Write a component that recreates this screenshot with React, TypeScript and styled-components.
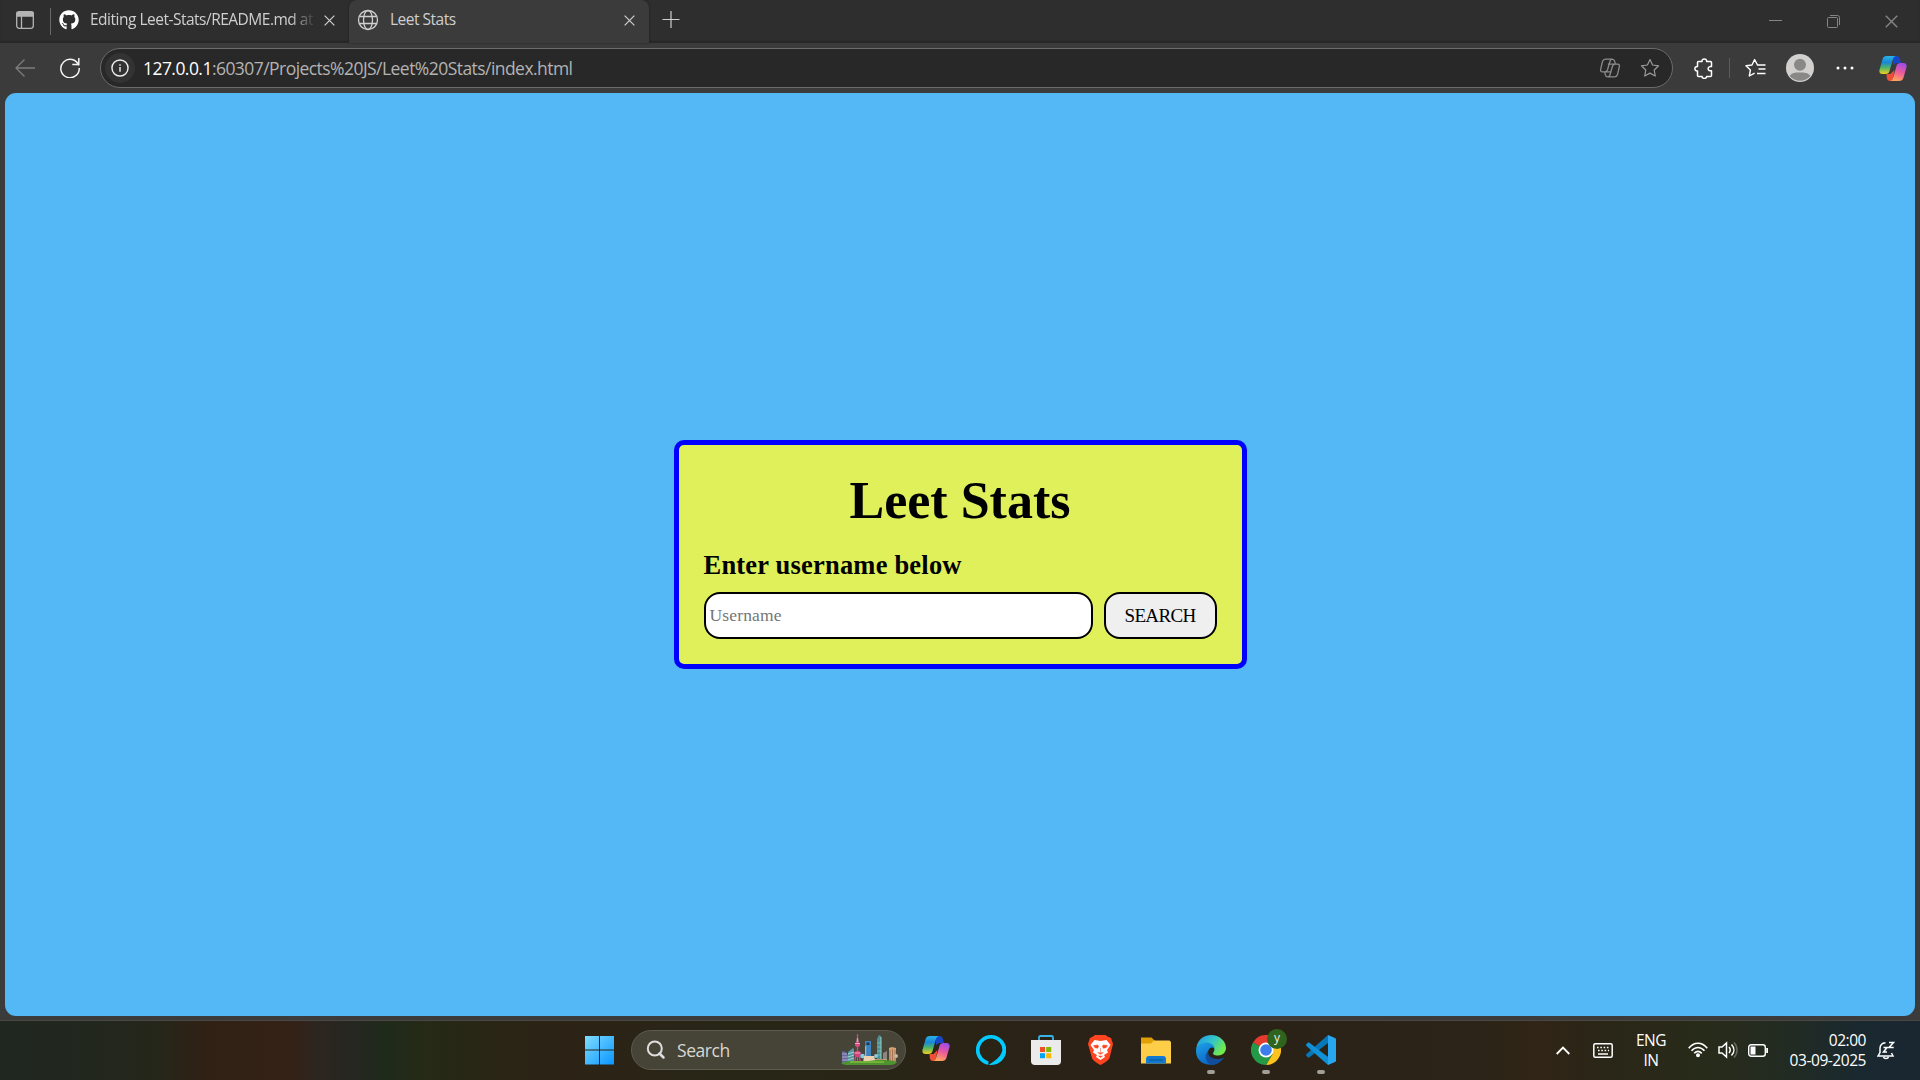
import React from "react";
import styled, { createGlobalStyle } from "styled-components";
import { FaGithub } from "react-icons/fa";

const Global = createGlobalStyle`
  * { box-sizing: border-box; }
  body { margin: 0; background: #3b3b3b; overflow: hidden; font-family: "Open Sans", "Noto Sans", sans-serif; }
  svg { display: block; flex: none; }
`;

const Screen = styled.div`
  width: 1920px; height: 1080px; display: flex; flex-direction: column; background: #3b3b3b;
`;
const TabStrip = styled.header`
  height: 43px; display: flex; align-items: flex-start; background: #2e2e2e;
  box-shadow: inset 0 -2px 1px #272727;
`;
const Workspaces = styled.div`
  width: 51px; height: 40px; padding: 11px 0 0 16px; border-right: 1px solid #666;
  border-image: linear-gradient(transparent 9px, #696969 9px, #696969 34px, transparent 34px) 1;
`;
const Tab = styled.div<{ $active?: boolean; $w: number }>`
  width: ${p => p.$w}px; height: 43px; display: flex; align-items: center; padding: 0 14px 3px 8px;
  background: ${p => (p.$active ? "#3b3b3b" : "transparent")};
  border-radius: ${p => (p.$active ? "8px 8px 0 0" : "0")};
  box-shadow: ${p => (p.$active ? "0 0 2px #1c1c1c" : "none")};
  color: #cfcfcf;
`;
const TabTitle = styled.span<{ $fade?: boolean; $spacing: number }>`
  flex: 1; margin: 0 0 2px 11px; overflow: hidden; white-space: nowrap; font-size: 15.5px; line-height: 22px;
  letter-spacing: ${p => p.$spacing}px;
  -webkit-mask-image: ${p => (p.$fade ? "linear-gradient(90deg, #000 200px, transparent 226px)" : "none")};
`;
const NewTab = styled.div`padding: 11px 0 0 13px;`;
const WindowControls = styled.div`
  margin-left: auto; display: flex; gap: 45px; padding: 15px 22px 0 0;
`;
const Toolbar = styled.div`
  height: 50px; display: flex; align-items: center; color: #f3f3f3;
`;
const NavButtons = styled.div`
  width: 100px; display: flex; gap: 25px; padding-left: 15px;
`;
const Address = styled.div`
  width: 1573px; height: 40px; border: 1px solid #6b6b6b; border-radius: 20px; background: #282828;
  display: flex; align-items: center; padding: 0 12px 0 4px;
`;
const InfoDisc = styled.div`
  width: 30px; height: 30px; border-radius: 50%; background: #333; display: grid; place-items: center;
`;
const Url = styled.div`
  flex: 1; margin: 0 0 1px 8px; font-size: 17.5px; line-height: 24px; letter-spacing: -0.55px; color: #b3b3b3;
`;
const Host = styled.span`color: #fff;`;
const AddressIcons = styled.div`display: flex; gap: 20px; align-items: center;`;
const ToolbarIcons = styled.div`
  display: flex; align-items: center; padding-left: 21px;
`;
const Rule = styled.div`width: 1px; height: 20px; background: #5c5c5c; margin: 0 15px;`;
const Spacer = styled.div<{ $w: number }>`width: ${p => p.$w}px;`;

const Page = styled.main`
  height: 923px; margin: 0 5px; border-radius: 11px; background: #53b8f5;
  display: flex; align-items: center; justify-content: center;
  font-family: "Liberation Serif", serif; color: #000;
`;
const Card = styled.section`
  width: 573px; height: 229px; border: 5px solid #0000ff; border-radius: 10px; background: #e0f05b;
  padding: 26px 25px 24px; display: flex; flex-direction: column;
`;
const Heading = styled.h1`
  margin: 0; text-align: center; font-size: 52px; line-height: 60px;
`;
const Label = styled.h2`
  margin: 19px 0 0; font-size: 26.5px; line-height: 30px; letter-spacing: 0.2px; white-space: nowrap;
`;
const Form = styled.div`display: flex; gap: 11px; margin-top: 12px;`;
const NameInput = styled.input`
  width: 389px; height: 47px; border: 2px solid #000; border-radius: 16px; background: #fff; padding: 1px 4px;
  font-family: inherit; font-size: 17.5px; letter-spacing: 0.15px; outline: none;
  &::placeholder { color: #757575; opacity: 1; }
`;
const SearchButton = styled.button`
  width: 113px; height: 47px; border: 2px solid #000; border-radius: 16px; background: #efefef; padding: 1px 0 0;
  font-family: inherit; font-size: 19px; letter-spacing: -0.65px; color: #000;
`;

const Taskbar = styled.footer`
  height: 60px; margin-top: 4px; border-top: 1px solid #4a4743; display: flex; align-items: center; color: #fff;
  padding-bottom: 1px;
  background: linear-gradient(90deg, #202720 0px, #22271e 100px, #26261a 160px, #302115 200px, #352217 290px, #2c251f 318px, #252722 355px, #202a1b 385px, #252a17 420px, #292615 480px, #2c2316 570px, #282617 720px, #292516 900px, #2a2216 1050px, #2a2216 1300px, #2c2418 1480px, #302516 1540px, #2a2618 1600px, #282b19 1700px, #222b23 1790px, #1a2930 1860px, #1a2530 1920px);
`;
const TaskApps = styled.div`
  margin-left: 585px; width: 762px; display: flex; align-items: center;
`;
const SearchBox = styled.div`
  width: 275px; height: 40px; margin-left: 16px; border-radius: 20px; border: 1px solid #5d5b4e;
  background: linear-gradient(90deg, #454437, #474438);
  display: flex; align-items: center; padding: 0 7px 0 14px; font-size: 17.5px; color: #d8d7d2; letter-spacing: -0.45px;
`;
const SearchText = styled.span`flex: 1; margin-left: 11px; line-height: 24px;`;
const AppIcon = styled.div<{ $running?: boolean; $gap: number }>`
  position: relative; width: 30px; height: 30px; margin-left: ${p => p.$gap}px;
  &::after {
    content: ""; display: ${p => (p.$running ? "block" : "none")};
    position: absolute; left: 11px; top: 35px; width: 8px; height: 4px; border-radius: 2px; background: #a19d97;
  }
`;
const ProfileBadge = styled.span`
  position: absolute; left: 16px; top: -6px; width: 20px; height: 20px; border-radius: 50%;
  background: #2f641e; color: #e6efe2; font-size: 12px; line-height: 17px; text-align: center;
`;
const Tray = styled.div`
  margin-left: auto; display: flex; align-items: center; padding-right: 25px;
`;
const TrayText = styled.div<{ $w: number; $right?: boolean; $spacing: number }>`
  width: ${p => p.$w}px; text-align: ${p => (p.$right ? "right" : "center")};
  font-size: 15.5px; line-height: 20px; letter-spacing: ${p => p.$spacing}px; white-space: nowrap;
  padding-bottom: 1px;
`;

const CopilotIcon = ({ id }: { id: string }) => (
  <svg width="28" height="27" viewBox="0 0 28 27">
    <defs>
      <linearGradient id={id + "a"} x1="0" y1="0" x2="0" y2="1">
        <stop offset="0" stopColor="#27b5e8" /><stop offset=".35" stopColor="#1a86d8" /><stop offset=".65" stopColor="#4fb568" /><stop offset="1" stopColor="#f4cf1c" />
      </linearGradient>
      <linearGradient id={id + "b"} x1=".7" y1="0" x2=".4" y2="1">
        <stop offset="0" stopColor="#9c4bea" /><stop offset=".5" stopColor="#ec5a9b" /><stop offset="1" stopColor="#ffa45c" />
      </linearGradient>
    </defs>
    <path d="M14 1h3.500c2 0 2.800 1 3.300 2.800L22 8h-5l-3 2z" fill="#1747c8" />
    <path d="M7.500 19h4l4-4-1.500 8c-.5 2-1.500 3-3 3-2 0-2.700-1-3.200-3z" fill="#ee5037" />
    <path d="M8 1h9c-1.700.3-2.600 1.500-3 3l-3.500 12c-.7 2.200-1.800 3-4 3H3.500C.8 19-.1 17 .6 14.500L3.600 4C4.300 2 5.500 1 8 1z" fill={`url(#${id}a)`} />
    <path d="M20 26h-9c1.700-.3 2.600-1.500 3-3l3.500-12c.7-2.200 1.800-3 4-3h3c2.700 0 3.600 2 2.900 4.500L24.400 23c-.7 2-1.900 3-4.400 3z" fill={`url(#${id}b)`} />
  </svg>
);

const CloseIcon = ({ size = 11, color = "#d0d0d0" }: { size?: number; color?: string }) => (
  <svg width={size} height={size} viewBox="0 0 12 12" fill="none" stroke={color} strokeWidth="1.3"><path d="M.7.7l10.600 10.600M11.300.7L.7 11.300" /></svg>
);

const StarPath = "M10 1.500l2.600 5.500 6 .8-4.400 4.200 1.100 6L10 15.100 4.700 18l1.100-6L1.400 7.800l6-.8z";

const Skyline = () => (
  <svg width="57" height="33" viewBox="0 0 57 33">
    <path d="M1 17l4 1 2 3v9H1z" fill="#65689c" /><path d="M1 20h5M1 23h6M1 26h6" stroke="#b3a5ca" />
    <path d="M7 18l5-4 1 1v15H7z" fill="#5496a0" /><path d="M7 20l6-2M7 23l6-2M7 26l6-2" stroke="#a2d0cf" />
    <path d="M16.500 0v31M15 19l-1.500 11M18 19l1.500 11" stroke="#c0508a" strokeWidth="1.300" />
    <path d="M15.300 8l.7-4h1l.7 4z" fill="#d89ab0" />
    <circle cx="16.500" cy="10.500" r="2.500" fill="#e0478b" /><circle cx="16.500" cy="20" r="3.200" fill="#d63f7f" /><path d="M14 9.500h5M13.500 19h6" stroke="#f6a6c4" />
    <path d="M24 7h6v23h-6z" fill="#3e83bd" /><path d="M25.500 8.500h3V11h-3z" fill="#24354c" /><path d="M24.700 12v17" stroke="#90cbe7" />
    <path d="M36 5l2-4 2 1v28h-4z" fill="#4b9196" /><path d="M40 3v26" stroke="#9ad0c5" /><path d="M36 9h4M36 13h4M36 17h4M36 21h4" stroke="#8bc7bf" strokeWidth=".7" />
    <path d="M42 19l4-2v12h-4z" fill="#8d8580" /><path d="M48 14l3-1 4 1v15h-7z" fill="#d5a46c" /><path d="M49 16v12M51.500 15v12M54 16v12" stroke="#a3755a" />
    <circle cx="21.500" cy="22" r="2.300" fill="#8bc9e5" /><circle cx="35" cy="22" r="2" fill="#84cce4" />
    <path d="M23 22h10l2 7H22z" fill="#ead0ae" /><path d="M34 25h12v4H34z" fill="#c79c79" /><circle cx="55" cy="22" r="2" fill="#c6b69a" />
    <path d="M0 29c8-3 13-1 19-2 10 1 15-2 25-1 6 0 10 1 12 2-2 3-6 3-9 3H8c-3 0-6 0-8-2z" fill="#4f9230" />
    <path d="M9 28h34" stroke="#80bd39" strokeWidth="1.500" />
  </svg>
);

export default function App() {
  return (
    <Screen>
      <Global />
      <TabStrip>
        <Workspaces>
          <svg width="18" height="18" viewBox="0 0 18 18" fill="none" stroke="#b4b4b4" strokeWidth="1.300">
            <rect x=".7" y=".7" width="16.600" height="16.600" rx="2.500" /><path d="M1 1.500h16v3.500H1z" fill="#b4b4b4" /><path d="M5.500 5v12" />
          </svg>
        </Workspaces>
        <Tab $w={298}>
          <FaGithub size={20} color="#fff" />
          <TabTitle $fade $spacing={-0.5}>Editing Leet-Stats/README.md at</TabTitle>
          <CloseIcon />
        </Tab>
        <Tab $w={300} $active>
          <svg width="22" height="22" viewBox="0 0 22 22" fill="none" stroke="#cfcfcf" strokeWidth="1.300">
            <circle cx="11" cy="11" r="9.500" /><ellipse cx="11" cy="11" rx="4.500" ry="9.500" /><path d="M2.300 7.500h17.400M2.300 14.500h17.400" />
          </svg>
          <TabTitle $spacing={-0.5}>Leet Stats</TabTitle>
          <CloseIcon />
        </Tab>
        <NewTab>
          <svg width="18" height="18" viewBox="0 0 18 18" stroke="#d0d0d0" strokeWidth="1.200"><path d="M.5 8.500h17M9 0v17" /></svg>
        </NewTab>
        <WindowControls>
          <svg width="13" height="13" viewBox="0 0 13 13" stroke="#858585"><path d="M0 5.500h13" /></svg>
          <svg width="13" height="13" viewBox="0 0 13 13" fill="none" stroke="#858585"><rect x=".5" y="2.500" width="10" height="10" rx="1" /><path d="M3 .5h7.500a2 2 0 0 1 2 2V10" /></svg>
          <CloseIcon size={13} color="#858585" />
        </WindowControls>
      </TabStrip>
      <Toolbar>
        <NavButtons>
          <svg width="20" height="20" viewBox="0 0 20 20" fill="none" stroke="#7d7d7d" strokeWidth="1.300"><path d="M20 10H1M9.500 1.500L1 10l8.500 8.500" /></svg>
          <svg width="20" height="20" viewBox="0 0 20 20" fill="none" stroke="#f4f4f4" strokeWidth="1.500"><path d="M18.700 7.500A9.200 9.200 0 1 0 19.200 10M18.800 0v6.500h-6.500" /></svg>
        </NavButtons>
        <Address>
          <InfoDisc>
            <svg width="18" height="18" viewBox="0 0 19 19" fill="none" stroke="#eee" strokeWidth="1.500"><circle cx="9.500" cy="9.500" r="8.500" /><path d="M9.500 8.500v5M9.500 5.500v1.500" /></svg>
          </InfoDisc>
          <Url><Host>127.0.0.1</Host>:60307/Projects%20JS/Leet%20Stats/index.html</Url>
          <AddressIcons>
            <svg width="20" height="20" viewBox="0 0 28 27" fill="none" stroke="#8b8b8b" strokeWidth="1.800">
              <path d="M8 1h9c2 0 3 1 3.500 3l1 4M17 1c-1.700.3-2.600 1.500-3 3l-3.500 12c-.7 2.200-1.800 3-4 3h-3C.8 19 .4 17 1.100 14.500L3.600 4C4.300 2 5.500 1 8 1zM20 26h-9c-2 0-3-1-3.500-3l-1-4M11 26c1.700-.3 2.600-1.500 3-3l3.500-12c.7-2.200 1.800-3 4-3h3c2.700 0 3.100 2 2.400 4.500L24.400 23c-.7 2-1.900 3-4.400 3zM11 8h10M7 19h9" />
            </svg>
            <svg width="20" height="20" viewBox="0 0 20 20" fill="none" stroke="#9a9a9a" strokeWidth="1.200" strokeLinejoin="round"><path d={StarPath} /></svg>
          </AddressIcons>
        </Address>
        <ToolbarIcons>
          <svg width="20" height="21" viewBox="0 0 20 21" fill="none" stroke="#fff" strokeWidth="1.500" strokeLinejoin="round">
            <path d="M4.500 3.500H8c-.4-3.500 5-3.500 4.600 0H16.500c.6 0 1 .4 1 1V8.500c-4.500-.7-4.500 5 0 4.300v4.700c0 .6-.4 1-1 1h-3.900c.4 2.500-4.900 2.500-4.500 0H4.500c-.6 0-1-.4-1-1v-4.600c-3.500.5-3.500-4.800 0-4.300V4.500c0-.6.4-1 1-1z" />
          </svg>
          <Rule />
          <svg width="21" height="20" viewBox="0 0 21 20" fill="none" stroke="#fff" strokeWidth="1.400" strokeLinejoin="round"><path d="M12.500 7l-2.900-5.500L7 7l-6 .8L5.400 12l-1.100 6 5.300-2.900M12 7h8.500M13.500 11h7M12 15.500h8.500" /></svg>
          <Spacer $w={20} />
          <svg width="28" height="28" viewBox="0 0 28 28"><circle cx="14" cy="14" r="14" fill="#d2d0ce" /><circle cx="14" cy="10.800" r="6" fill="#8a8886" /><path d="M3.600 22C6 18.300 10 18.500 14 18.500s8 0 10.400 3.500A14 14 0 0 1 3.600 22z" fill="#8a8886" /></svg>
          <Spacer $w={22} />
          <svg width="18" height="4" viewBox="0 0 18 4" fill="#fff"><circle cx="2" cy="2" r="1.500" /><circle cx="9" cy="2" r="1.500" /><circle cx="16" cy="2" r="1.500" /></svg>
          <Spacer $w={25} />
          <CopilotIcon id="tb" />
        </ToolbarIcons>
      </Toolbar>
      <Page>
        <Card>
          <Heading>Leet Stats</Heading>
          <Label>Enter username below</Label>
          <Form>
            <NameInput placeholder="Username" />
            <SearchButton>SEARCH</SearchButton>
          </Form>
        </Card>
      </Page>
      <Taskbar>
        <TaskApps>
          <svg width="30" height="30" viewBox="0 0 30 30">
            <defs><linearGradient id="win" x1="0" y1="0" x2="1" y2="1"><stop offset="0" stopColor="#7fddff" /><stop offset="1" stopColor="#0995ff" /></linearGradient></defs>
            <path d="M.5 1h13.500v13.500H0V1zM15 1h14v13.500H15zM0 15.500h14v14H0zM15 15.500h14v14H15z" fill="url(#win)" />
          </svg>
          <SearchBox>
            <svg width="20" height="20" viewBox="0 0 20 20" fill="none" stroke="#dedede" strokeWidth="2"><circle cx="8.800" cy="8.500" r="7" /><path d="M13.500 13.500l4 4" strokeWidth="2.500" strokeLinecap="round" /></svg>
            <SearchText>Search</SearchText>
            <Skyline />
          </SearchBox>
          <AppIcon $gap={16}><CopilotIcon id="tk" /></AppIcon>
          <AppIcon $gap={24}>
            <svg width="30" height="30" viewBox="0 0 30 30"><path fillRule="evenodd" d="M15 0a15 15 0 0 0-2.600 29.800V26.100C11.500 25.800 11 25.700 10 25.200A11.400 11.400 0 1 1 26.400 15C25 22 19 26 12.800 29.800A15 15 0 1 0 15 0z" fill="#00caff" /></svg>
          </AppIcon>
          <AppIcon $gap={25}>
            <svg width="30" height="30" viewBox="0 0 30 30">
              <path d="M8 6V2.500C8 1.700 8.500 1 9.500 1h11c1 0 1.500.7 1.500 1.500V6" fill="none" stroke="#35b5e8" strokeWidth="1.800" />
              <path d="M0 5h30v21a4 4 0 0 1-4 4H4a4 4 0 0 1-4-4z" fill="#ebebeb" />
              <path d="M9 12h5v5H9z" fill="#f25022" /><path d="M15.200 12h5v5h-5z" fill="#7fba00" /><path d="M9 18.200h5v5H9z" fill="#00a4ef" /><path d="M15.200 18.200h5v5h-5z" fill="#ffb900" />
            </svg>
          </AppIcon>
          <AppIcon $gap={25}>
            <svg width="30" height="30" viewBox="0 0 30 30">
              <path d="M7 1.500L9 0h10.500l2 1.500L25 3l1 3 1 3-3.500 14c-.7 2-5 5-9 7-4-2-8-5-8.500-7L2 9l1-3 1-3z" fill="#ff4420" />
              <path d="M8.500 5l6 1 6-1 4 5-3.500 5 1 2.500-4 2.500 1 2-4.500 3L10 22l1-2-4-2.500 1-2.500L4.500 10z" fill="#fff" />
              <path d="M7.500 10.500l4-.5 1.200 1-1 2.200-2.700-.4zM21.500 10.500l-4-.5-1.200 1 1 2.200 2.700-.4zM14.500 13v4M11.500 17.500l3 1.800 3-1.800M14.500 22.500l-2-1.500h4z" fill="#ff4420" stroke="#ff4420" strokeWidth=".5" />
            </svg>
          </AppIcon>
          <AppIcon $gap={25}>
            <svg width="30" height="30" viewBox="0 0 30 30">
              <path d="M0 2.500h10.500l3 3v4H0z" fill="#e0a006" /><path d="M0 8.500h10l3-3h15.500L30 7v21.500H0z" fill="#ffce48" />
              <path d="M5 28.500V24a3 3 0 0 1 3-3h14a3 3 0 0 1 3 3v4.500z" fill="#1179d1" /><path d="M8 25h14" stroke="#08548f" />
            </svg>
          </AppIcon>
          <AppIcon $gap={25} $running>
            <svg width="30" height="30" viewBox="0 0 30 30">
              <defs>
                <linearGradient id="eg" x1="0" y1="0" x2="1" y2=".5"><stop offset="0" stopColor="#2295e5" /><stop offset=".55" stopColor="#33c4ca" /><stop offset="1" stopColor="#72e94d" /></linearGradient>
                <linearGradient id="eb" x1="0" y1="0" x2=".5" y2="1"><stop offset="0" stopColor="#1fa2e8" /><stop offset="1" stopColor="#0867c6" /></linearGradient>
              </defs>
              <path d="M1 10C3 3.500 9 0 15 0c8.500 0 15 6 15 13 0 4.500-3.500 7.500-8 7.500-4 0-6-1.500-4.500-3.200 2.700-4-1-8.300-6-8.300C6 9 1.500 12.500 0 15z" fill="url(#eg)" />
              <path d="M0 16C0 11 5 7.500 10 7.500c4.500 0 8 2.500 8.500 6-3-2.500-6.500 0-6.500 4.500 0 6 5 10.500 9 10.500C13 32 0 28.500 0 16z" fill="url(#eb)" />
              <path d="M12 16c-1 6 7 10.500 16 6.500C25 28 19 30.500 15 29.500c-5-2-7.500-9-3-13.500z" fill="#124d9b" />
            </svg>
          </AppIcon>
          <AppIcon $gap={25} $running>
            <svg width="30" height="30" viewBox="0 0 30 30">
              <path d="M15 15L2 7.500A15 15 0 0 1 28 7.500z" fill="#e53b2e" /><path d="M15 15L28 7.500A15 15 0 0 1 15 30l6.500-11z" fill="#fcc31e" />
              <path d="M15 15L2 7.500A15 15 0 0 0 15 30l6.500-11z" fill="#249947" />
              <circle cx="15" cy="15" r="7.500" fill="#fff" /><circle cx="15" cy="15" r="5.800" fill="#3b7ded" />
            </svg>
            <ProfileBadge>y</ProfileBadge>
          </AppIcon>
          <AppIcon $gap={25} $running>
            <svg width="30" height="30" viewBox="0 0 30 30">
              <path d="M22 0v8L3.500 22.300c-.6.4-1.200.4-1.700 0L.5 21c-.6-.6-.6-1.300 0-1.900z" fill="#0877b9" />
              <path d="M22 30v-8L3.500 7.700c-.6-.4-1.200-.4-1.700 0L.5 9c-.6.600-.6 1.300 0 1.900z" fill="#1190d7" />
              <path d="M22 0l7 3c.6.300 1 .8 1 1.500v21c0 .7-.4 1.200-1 1.500l-7 3z" fill="#28a7f0" />
            </svg>
          </AppIcon>
        </TaskApps>
        <Tray>
          <svg width="14" height="9" viewBox="0 0 14 9" fill="none" stroke="#fff" strokeWidth="1.800"><path d="M.7 8L7 1.500 13.300 8" /></svg>
          <Spacer $w={23} />
          <svg width="20" height="15" viewBox="0 0 20 15" fill="none" stroke="#fff" strokeWidth="1.500"><rect x=".8" y=".8" width="18.400" height="13.400" rx="1.500" /><path d="M4 4.500h12M5 7.500h11" strokeDasharray="1.600 1.700" /><path d="M5 11h10" /></svg>
          <Spacer $w={20} />
          <TrayText $w={36} $spacing={-0.6}>ENG<br />IN</TrayText>
          <Spacer $w={19} />
          <svg width="20" height="16" viewBox="0 0 20 16" fill="none" stroke="#fff" strokeWidth="1.600"><path d="M.7 6.200C6-.5 14-.5 19.300 6.200M3.500 8.800c4-4.500 9-4.500 13 0M6.200 11.300c2.500-2.500 5-2.500 7.600 0" /><circle cx="10" cy="13.300" r="1.200" fill="#fff" /></svg>
          <Spacer $w={10} />
          <svg width="20" height="18" viewBox="0 0 20 18" fill="none" stroke="#fff" strokeWidth="1.500"><path d="M1 6h3l4.500-4v14L4 12H1zM11 6c1.500 1.800 1.500 4.200 0 6M13.500 3.500c3.200 3.300 3.200 7.700 0 11" /><path d="M16 1.500c4 4 4 11 0 15" stroke="#68685b" /></svg>
          <Spacer $w={10} />
          <svg width="20" height="13" viewBox="0 0 20 13"><rect x=".7" y=".7" width="16.600" height="11.600" rx="2.500" fill="none" stroke="#fff" strokeWidth="1.400" /><path d="M2.500 2.500h5v8h-5zM18.200 4H20v5h-1.800z" fill="#fff" /></svg>
          <TrayText $w={98} $right $spacing={-0.45}>02:00<br />03-09-2025</TrayText>
          <Spacer $w={11} />
          <svg width="18" height="19" viewBox="0 0 18 19" fill="none" stroke="#fff" strokeWidth="1.500">
            <path d="M8.500 1.700C5 2 3 4.200 3 7.500v4L1 15h15l-1.500-3M6.500 16c.5 2 4.500 2 5 0M12 1.500h4.500L12 6.500h4.700M6.500 6.500H10L6.500 11H10" />
          </svg>
        </Tray>
      </Taskbar>
    </Screen>
  );
}
